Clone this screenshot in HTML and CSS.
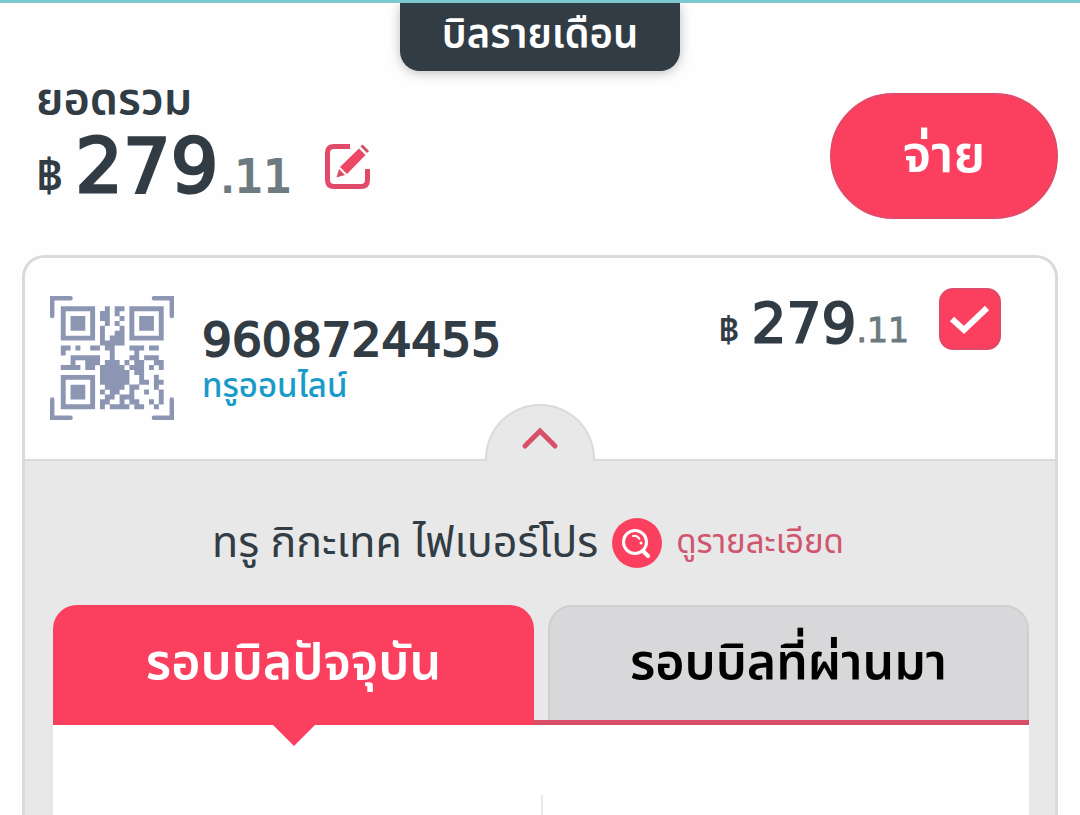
FILE: index.html
```html
<!DOCTYPE html>
<html lang="th">
  <head>
    <meta charset="UTF-8">
    <meta name="viewport" content="width=device-width, initial-scale=1.0">
    <title>บิลรายเดือน</title>
    <link rel="stylesheet" href="styles.css">
  </head>
  <body>
    <h1 class="pagetitle">บิลรายเดือน</h1>
    <div class="total">
      <div class="totalleft">
        <div class="totallabel">ยอดรวม</div>
        <div class="amount">
          <span class="baht">฿</span>
          <span class="whole">279</span>
          <span class="decimal">.11</span>
          <button class="edit" type="button" aria-label="แก้ไข">
            <svg width="48" height="48" viewBox="0 0 48 48">
              <path d="M26 3.500H10Q3.500 3.500 3.500 10V37Q3.500 43.500 10 43.500H37Q43.500 43.500 43.500 37V26" fill="none" stroke="#e14a68" stroke-width="5"/>
              <path d="M35 5.500L41.500 12L23 31L16 24Z" fill="#ed4764"/>
              <path d="M15 26L21 32L12.500 34.500Z" fill="#d94f68"/>
              <path d="M37.500 2.500L44 9" stroke="#c9526b" stroke-width="3"/>
            </svg>
          </button>
        </div>
      </div>
      <button class="pay" type="button">จ่าย</button>
    </div>
    <div class="card">
      <div class="cardheader">
        <svg class="qr" width="124" height="124" viewBox="-2.200 -2.100 25.300 25.300">
          <g fill="none" stroke="#8c96b3">
            <g stroke-width="0.900">
              <path d="M2 -1.650H-1.750V2M19 -1.650H22.650V2M2 22.750H-1.750V19M19 22.750H22.650V19" stroke-linecap="round"/>
            </g>
            <path d="M.5 .5h6v6h-6zM14.500 .5h6v6h-6zM.5 14.500h6v6h-6z"/>
            <path d="M9 .5h1m1 0h2M8 1.500h2m1 0h1M8 2.500h2m2 0h1M9 3.500h1m1 0h1M8 4.500h1m3 0h1M8 5.500h1m2 0h2M8 6.500h1m1 0h3M8 7.500h5
              M0 8.500h2m1 0h1m2 0h2m1 0h2m3 0h3m1 0h2M0 9.500h1m9 0h1m4 0h1M2 10.500h6m2 0h1m3 0h2m1 0h3
              M2 11.500h1m2 0h3m1 0h3m1 0h1m1 0h2m2 0h2M0 12.500h4m1 0h2m1 0h5m1 0h3m1 0h1m1 0h1
              M8 13.500h6m1 0h2M8 14.500h6m2 0h1m2 0h1M8 15.500h6m2 0h2m1 0h2M9 16.500h4m1 0h2m3 0h1
              M8 17.500h1m1 0h2m2 0h1m2 0h1m2 0h1M9 18.500h2m1 0h3m5 0h1M8 19.500h2m2 0h1m1 0h2m2 0h1m1 0h1M8 20.500h1m1 0h4m1 0h2m2 0h1" stroke-width="1.040"/>
          </g>
          <path d="M2 2h3v3h-3zM16 2h3v3h-3zM2 16h3v3h-3z" fill="#8c96b3"/>
        </svg>
        <div class="account">
          <div class="number">9608724455</div>
          <div class="service">ทรูออนไลน์</div>
        </div>
        <div class="amount amountsmall">
          <span class="baht">฿</span>
          <span class="whole">279</span>
          <span class="decimal">.11</span>
        </div>
        <input class="check" type="checkbox" aria-label="เลือกบิล" checked>
        <button class="collapse" type="button" aria-label="ย่อ">
          <svg width="40" height="26" viewBox="0 0 40 26">
            <path d="M5 22L20 7L35 22" fill="none" stroke="#d94f68" stroke-width="5" stroke-linecap="round"/>
          </svg>
        </button>
      </div>
      <div class="details">
        <div class="plan">
          <span>ทรู กิกะเทค ไฟเบอร์โปร</span>
          <a class="more" href="#">
            <svg width="50" height="50" viewBox="0 0 50 50">
              <circle cx="25" cy="25" r="25" fill="#fb405f"/>
              <g fill="none" stroke="#fff">
                <circle cx="23" cy="24" r="11.500" stroke-width="3"/>
                <path d="M31 33L36 38" stroke-width="4" stroke-linecap="round"/>
                <path d="M21 18Q25 17 27.500 21" stroke-width="2" stroke-linecap="round"/>
              </g>
              <circle cx="29" cy="25" r="1.500" fill="#fff"/>
            </svg>
            ดูรายละเอียด
          </a>
        </div>
        <div class="tabs" role="tablist">
          <button class="tab active" type="button" role="tab" aria-selected="true">รอบบิลปัจจุบัน</button>
          <button class="tab" type="button" role="tab" aria-selected="false">รอบบิลที่ผ่านมา</button>
        </div>
        <div class="panel" role="tabpanel">
          <div class="column"></div>
          <div class="column"></div>
        </div>
      </div>
    </div>
  </body>
</html>
```

FILE: styles.css
```css
* {
  box-sizing: border-box;
}
body {
  margin: 0;
  min-height: 100vh;
  display: flex;
  flex-direction: column;
  border-top: 3px solid #7bc9cf;
  background-color: #fefefe;
  color: #313c45;
  font-family: "Noto Sans Thai", "Noto Sans", sans-serif;
}
button {
  margin: 0;
  padding: 0;
  border: none;
  background: none;
  font-family: inherit;
  cursor: pointer;
}
svg {
  display: block;
}
.pagetitle {
  align-self: center;
  margin: 0;
  padding: 0 42px;
  height: 68px;
  line-height: 66px;
  border-radius: 0 0 20px 20px;
  background-color: #313c45;
  box-shadow: 0 2px 12px rgba(0, 0, 0, 0.25);
  color: white;
  font-size: 40px;
  font-weight: 600;
}
.total {
  display: flex;
  justify-content: space-between;
  align-items: flex-start;
  padding: 0 22px 36px 36px;
}
.totallabel {
  font-size: 45px;
  font-weight: 600;
  line-height: 58px;
}
.amount {
  display: flex;
  align-items: baseline;
  font-family: "DejaVu Sans", "Noto Sans Thai", sans-serif;
  line-height: 1;
}
.baht {
  font-family: "Noto Sans Thai", "Noto Sans", sans-serif;
  font-size: 47px;
  font-weight: 600;
  margin-right: 12px;
}
.whole {
  font-size: 75px;
  -webkit-text-stroke: 3px #313c45;
}
.decimal {
  margin-left: 2px;
  font-size: 45px;
  color: #6d7a80;
  -webkit-text-stroke: 2px #6d7a80;
}
.edit {
  align-self: center;
  margin-left: 32px;
}
.pay {
  width: 228px;
  height: 126px;
  margin-top: 22px;
  border: 2px solid #e14a68;
  border-radius: 63px;
  background-color: #fb405f;
  color: white;
  font-size: 52px;
  font-weight: 600;
}
.card {
  flex: 1;
  display: flex;
  flex-direction: column;
  margin: 0 22px;
  border: 3px solid #d9dadb;
  border-bottom: none;
  border-radius: 22px 22px 0 0;
}
.cardheader {
  position: relative;
  display: flex;
  align-items: flex-start;
  height: 203px;
  padding: 30px 54px 0 25px;
  border-bottom: 2px solid #d9dadb;
}
.qr {
  margin-top: 8px;
}
.account {
  flex: 1;
  margin-left: 28px;
  padding-top: 25px;
}
.number {
  font-family: "DejaVu Sans", sans-serif;
  font-size: 47px;
  line-height: 54px;
  -webkit-text-stroke: 2px #313c45;
}
.service {
  font-size: 33px;
  font-weight: 500;
  line-height: 40px;
  color: #189bc9;
}
.amountsmall {
  margin-top: 8px;
}
.amountsmall .baht {
  font-size: 36px;
}
.amountsmall .whole {
  font-size: 55px;
  -webkit-text-stroke: 2px #313c45;
}
.amountsmall .decimal {
  margin-left: 0;
  font-size: 33px;
  -webkit-text-stroke: 1px #6d7a80;
}
.check {
  appearance: none;
  width: 62px;
  height: 62px;
  margin: 0 0 0 30px;
  border: 2px solid #e14a68;
  border-radius: 14px;
  background: #fb405f url("data:image/svg+xml,%3Csvg xmlns='http://www.w3.org/2000/svg' viewBox='0 0 58 58'%3E%3Cpath d='M11 29L23 40L46 18' fill='none' stroke='white' stroke-width='6'/%3E%3C/svg%3E") center no-repeat;
}
/* half circle that sits on the header's bottom line */
.collapse {
  position: absolute;
  left: 50%;
  bottom: -2px;
  transform: translateX(-50%);
  display: flex;
  justify-content: center;
  width: 110px;
  height: 57px;
  padding-top: 18px;
  border: 2px solid #d9dadb;
  border-bottom: none;
  border-radius: 55px 55px 0 0;
  background-color: #e8e8e8;
}
.details {
  flex: 1;
  display: flex;
  flex-direction: column;
  padding: 52px 26px 0 28px;
  background-color: #e8e8e8;
}
.plan {
  display: flex;
  justify-content: center;
  align-items: center;
  gap: 14px;
  height: 60px;
  padding-right: 26px;
  font-size: 43px;
}
.more {
  display: flex;
  align-items: center;
  gap: 14px;
  color: #cf566d;
  font-size: 33px;
  text-decoration: none;
}
.tabs {
  display: flex;
  gap: 14px;
  margin-top: 32px;
  border-bottom: 5px solid #d94f68;
}
.tab {
  flex: 1;
  height: 115px;
  border: 2px solid #cfcfd0;
  border-bottom: none;
  border-radius: 24px 24px 0 0;
  background-color: #d8d8da;
  color: black;
  font-size: 50px;
  font-weight: 600;
}
.tab.active {
  position: relative;
  height: 120px;
  margin-bottom: -5px;
  padding-bottom: 5px;
  border-color: #fb405f;
  background-color: #fb405f;
  color: white;
}
/* arrow pointing at the open panel */
.tab.active::after {
  content: "";
  position: absolute;
  top: 100%;
  left: 50%;
  transform: translateX(-50%);
  border: 21px solid transparent;
  border-top-color: #fb405f;
  border-bottom: none;
}
.panel {
  flex: 1;
  display: grid;
  grid-template-columns: 1fr 1fr;
  padding-top: 70px;
  background-color: white;
}
.column + .column {
  border-left: 2px solid #e8e8e8;
}
```
